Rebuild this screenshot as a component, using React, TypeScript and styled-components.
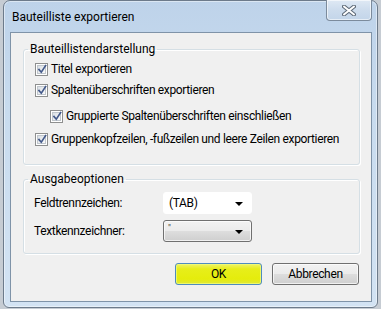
import React from "react";
import styled, { createGlobalStyle } from "styled-components";

const GlobalStyle = createGlobalStyle`
  html, body {
    margin: 0;
    padding: 0;
  }
  body {
    width: 381px;
    height: 309px;
    overflow: hidden;
    background: #c6ccd3;
    font-family: Roboto, "Noto Sans", sans-serif;
    font-size: 12px;
    letter-spacing: -0.35px;
    color: #000;
  }
`;

const Window = styled.div`
  box-sizing: border-box;
  width: 375px;
  height: 308px;
  margin-left: 3px;
  display: flex;
  flex-direction: column;
  border: 1px solid #6d7b8b;
  border-radius: 7px 7px 6px 6px;
  background: linear-gradient(180deg, #bed3ea 0%, #c8dbee 35%, #d3e3f3 100%);
  box-shadow: inset 0 0 0 1px rgba(255, 255, 255, 0.45);
`;

const TitleBar = styled.div`
  height: 31px;
  display: flex;
  align-items: flex-start;
`;

const Title = styled.div`
  padding: 8px 0 0 8px;
  line-height: 16px;
  letter-spacing: 0;
  color: #000;
`;

const CloseButton = styled.div`
  box-sizing: border-box;
  margin: -1px 5px 0 auto;
  width: 46px;
  height: 21px;
  border: 1px solid #7c8b9c;
  border-top: none;
  border-radius: 0 0 4px 4px;
  background: linear-gradient(180deg, #dfe9f4 0%, #cddced 50%, #c3d5e9 100%);
  box-shadow: inset 0 0 0 1px rgba(255, 255, 255, 0.6);
  display: flex;
  align-items: center;
  justify-content: center;
`;

const Client = styled.div`
  flex: 1;
  margin: 0 5px 5px 6px;
  border: 1px solid #7f93a8;
  background: #f0f0f0;
  padding: 8px 11px 0 12px;
  display: flex;
  flex-direction: column;
`;

const Group = styled.fieldset<{ $top?: number; $bottom: number }>`
  margin: ${(p) => p.$top ?? 0}px 0 0 0;
  padding: 0 10px ${(p) => p.$bottom}px 4px;
  border: 1px solid #d5dfe5;
  border-radius: 3px;
  box-shadow: inset 1px 1px 0 #fff, 1px 1px 0 #fff;
  min-width: 0;
`;

const Legend = styled.legend`
  padding: 0 2px;
  line-height: 16px;
  letter-spacing: 0;
`;

const CheckRow = styled.label<{ $space: number; $indent?: boolean }>`
  display: flex;
  align-items: center;
  gap: 3px;
  height: 16px;
  margin-top: ${(p) => p.$space}px;
  padding-left: ${(p) => (p.$indent ? 22 : 7)}px;
  white-space: nowrap;
`;

const Box = styled.span`
  box-sizing: border-box;
  width: 13px;
  height: 13px;
  border: 1px solid #8e8f8f;
  background: #fff;
  display: flex;
  align-items: center;
  justify-content: center;
`;

const BoxInner = styled.span`
  width: 9px;
  height: 9px;
  border: 1px solid #c0c6cc;
  box-sizing: border-box;
  background: linear-gradient(135deg, #d9dee4 0%, #eef0f2 60%, #fafafa 100%);
  position: relative;
  overflow: visible;
`;

const CheckMark = styled.svg`
  position: absolute;
  left: -1px;
  top: -2px;
`;

const FieldRow = styled.div<{ $space: number }>`
  display: grid;
  grid-template-columns: 129px 89px;
  align-items: center;
  margin-top: ${(p) => p.$space}px;
  padding-left: 6px;
`;

const Combo = styled.div<{ $flat?: boolean }>`
  box-sizing: border-box;
  height: 22px;
  display: flex;
  align-items: ${(p) => (p.$flat ? "center" : "flex-start")};
  padding: ${(p) => (p.$flat ? "0 8px 0 5px" : "2px 8px 0 4px")};
  border-radius: 3px;
  border: 1px solid ${(p) => (p.$flat ? "#fff" : "#707070")};
  background: ${(p) =>
    p.$flat
      ? "#fff"
      : "linear-gradient(180deg, #f2f2f2 0%, #ebebeb 48%, #dddddd 52%, #cfcfcf 100%)"};
  box-shadow: ${(p) => (p.$flat ? "none" : "inset 0 0 0 1px rgba(255,255,255,0.7)")};
`;

const ComboText = styled.span<{ $small?: boolean }>`
  flex: 1;
  font-size: ${(p) => (p.$small ? 9 : 12)}px;
  line-height: ${(p) => (p.$small ? 10 : 16)}px;
  color: ${(p) => (p.$small ? "#444" : "#000")};
`;

const Arrow = styled.span<{ $low?: boolean }>`
  width: 0;
  height: 0;
  border-left: 4px solid transparent;
  border-right: 4px solid transparent;
  border-top: 4px solid #000;
  align-self: center;
  margin-top: ${(p) => (p.$low ? -1 : 1)}px;
`;

const ButtonRow = styled.div`
  display: flex;
  justify-content: flex-end;
  gap: 10px;
  margin-top: 9px;
  padding-right: 1px;
`;

const Button = styled.div<{ $marked?: boolean }>`
  box-sizing: border-box;
  width: 87px;
  height: 22px;
  display: flex;
  align-items: center;
  justify-content: center;
  border-radius: 3px;
  border: 1px solid ${(p) => (p.$marked ? "#4f8cbd" : "#707070")};
  background: ${(p) =>
    p.$marked
      ? "linear-gradient(180deg, #eef36a 0%, #e7ee1a 25%, #e5ec0c 75%, #dfe83a 100%)"
      : "linear-gradient(180deg, #f2f2f2 0%, #ebebeb 48%, #dddddd 52%, #cfcfcf 100%)"};
  box-shadow: inset 0 0 0 1px ${(p) => (p.$marked ? "rgba(240,250,120,0.8)" : "rgba(255,255,255,0.7)")};
`;

const Check = ({ label, space, indent }: { label: string; space: number; indent?: boolean }) => (
  <CheckRow $space={space} $indent={indent}>
    <Box>
      <BoxInner>
        <CheckMark width="11" height="11" viewBox="0 0 11 11">
          <path d="M2 5.5 L4.3 8.2 L8.6 1.6" fill="none" stroke="#43598a" strokeWidth="1.7" strokeLinecap="square" />
        </CheckMark>
      </BoxInner>
    </Box>
    <span>{label}</span>
  </CheckRow>
);

export default function App() {
  return (
    <>
      <GlobalStyle />
      <Window>
        <TitleBar>
          <Title>Bauteilliste exportieren</Title>
          <CloseButton>
            <svg width="14" height="11" viewBox="0 0 14 11">
              <path d="M2 1.5 L12 9.5 M12 1.5 L2 9.5" stroke="#5d6977" strokeWidth="4" strokeLinecap="round" />
              <path d="M2 1.5 L12 9.5 M12 1.5 L2 9.5" stroke="#ffffff" strokeWidth="2" strokeLinecap="round" />
            </svg>
          </CloseButton>
        </TitleBar>
        <Client>
          <Group $bottom={17}>
            <Legend>Bauteillistendarstellung</Legend>
            <Check label="Titel exportieren" space={4} />
            <Check label="Spaltenüberschriften exportieren" space={5} />
            <Check label="Gruppierte Spaltenüberschriften einschließen" space={10} indent />
            <Check label="Gruppenkopfzeilen, -fußzeilen und leere Zeilen exportieren" space={7} />
          </Group>
          <Group $top={6} $bottom={11}>
            <Legend>Ausgabeoptionen</Legend>
            <FieldRow $space={5}>
              <span>Feldtrennzeichen:</span>
              <Combo $flat>
                <ComboText>(TAB)</ComboText>
                <Arrow />
              </Combo>
            </FieldRow>
            <FieldRow $space={6}>
              <span>Textkennzeichner:</span>
              <Combo>
                <ComboText $small>"</ComboText>
                <Arrow $low />
              </Combo>
            </FieldRow>
          </Group>
          <ButtonRow>
            <Button $marked>OK</Button>
            <Button>Abbrechen</Button>
          </ButtonRow>
        </Client>
      </Window>
    </>
  );
}
